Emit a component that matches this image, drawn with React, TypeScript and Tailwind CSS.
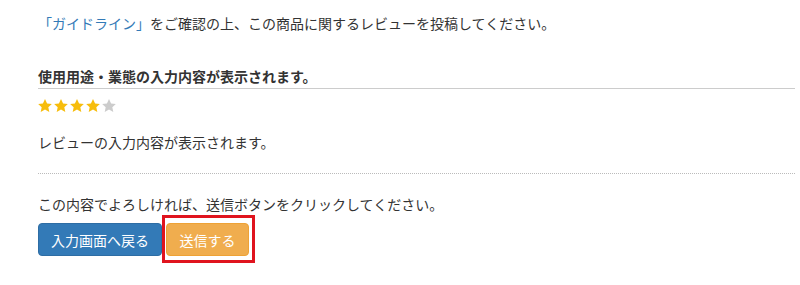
import React from 'react';

const font = 'font-["Noto_Sans_CJK_JP","Liberation_Sans",sans-serif]';

function Star({ on }: { on: boolean }) {
  return (
    <svg viewBox="1.5 1.5 21 20" className="h-[13px] w-[14px]" aria-hidden>
      <path
        d="M12 1.5l3.2 6.9 7.3.8-5.4 5 1.5 7.3L12 17.8l-6.6 3.7 1.5-7.3-5.4-5 7.3-.8z"
        fill={on ? '#f7bd0c' : '#cccccc'}
      />
    </svg>
  );
}

export default function App() {
  const rating = 4;

  return (
    <div className={`${font} bg-white pl-[38px] pr-[5px] pt-[13px] text-[14px] leading-[20px] text-[#333]`}>
      <p>
        <a href="#" className="text-[#337ab7]">「ガイドライン」</a>
        をご確認の上、この商品に関するレビューを投稿してください。
      </p>

      <h3 className="mt-[33px] border-b border-[#cccccc] pb-[2px] font-bold">
        使用用途・業態の入力内容が表示されます。
      </h3>

      <div className="mt-[10px] flex gap-[2px]">
        {[1, 2, 3, 4, 5].map((i) => (
          <Star key={i} on={i <= rating} />
        ))}
      </div>

      <p className="mt-[20px]">レビューの入力内容が表示されます。</p>

      <hr className="mt-[21px] border-0 border-t border-dotted border-[#bbbbbb]" />

      <p className="mt-[20px]">この内容でよろしければ、送信ボタンをクリックしてください。</p>

      <div className="mt-[9px] flex items-start gap-[4px] pb-[28px]">
        <button className="h-[33px] w-[124px] rounded-[4px] border border-[#2e6da4] bg-[#337ab7] text-white">
          入力画面へ戻る
        </button>
        <div className="relative">
          <button className="h-[33px] w-[83px] rounded-[4px] border border-[#eea236] bg-[#f0ad4e] text-white">
            送信する
          </button>
          <span className="pointer-events-none absolute -bottom-[7px] -left-[4px] -right-[6px] -top-[8px] border-[3px] border-[#e0141e]" />
        </div>
      </div>
    </div>
  );
}
